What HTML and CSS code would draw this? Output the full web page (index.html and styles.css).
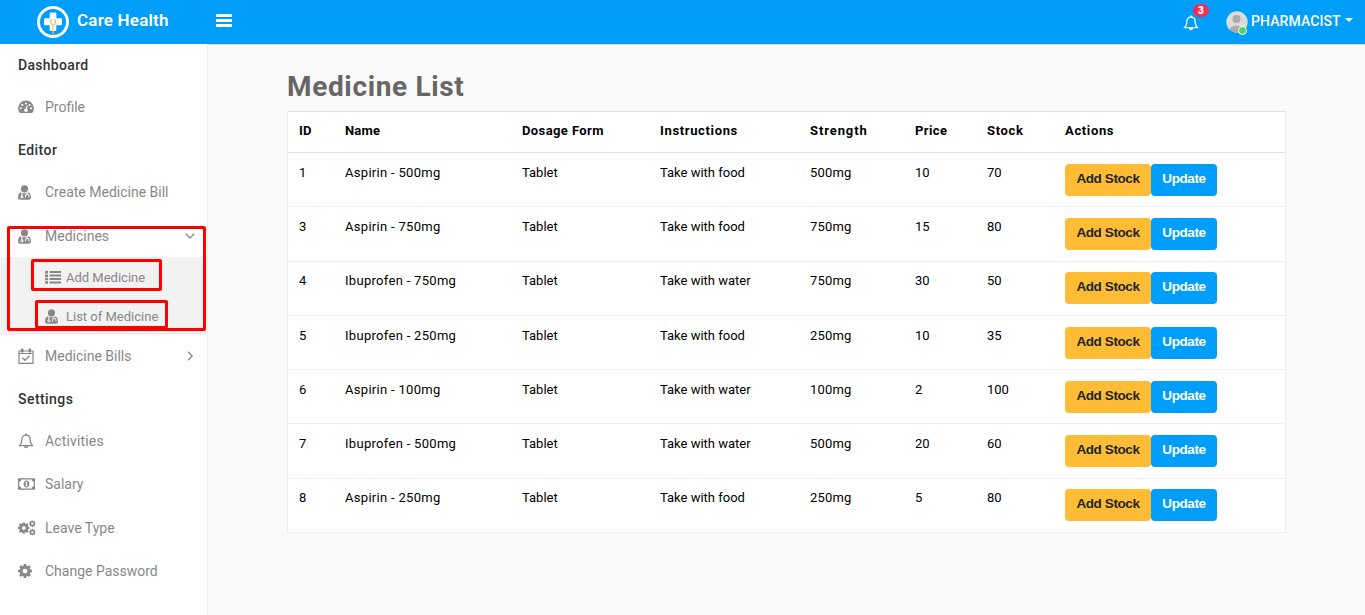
FILE: index.html
```html
<!DOCTYPE html>
<html lang="en">
<head>
<meta charset="utf-8">
<title>Care Health</title>
<link rel="stylesheet" href="styles.css">
</head>
<body>
<svg width="0" height="0" class="defs">
  <symbol id="cog" viewBox="128 128 1536 1536"><path d="M1152 896q0-106-75-181t-181-75-181 75-75 181 75 181 181 75 181-75 75-181zm512-109v222q0 12-8 23t-20 13l-185 28q-19 54-39 91 35 50 107 138 10 12 10 25t-9 23q-27 37-99 108t-94 71q-12 0-26-9l-138-108q-44 23-91 38-16 136-29 186-7 28-36 28h-222q-14 0-24.5-8.5t-11.5-21.5l-28-184q-49-16-90-37l-141 107q-10 9-25 9-14 0-25-11-126-114-165-168-7-10-7-23 0-12 8-23 15-21 51-66.5t54-70.5q-27-50-41-99l-183-27q-13-2-21-12.5t-8-23.5v-222q0-12 8-23t19-13l186-28q14-46 39-92-40-57-107-138-10-12-10-24 0-10 9-23 26-36 98.5-107.5t94.5-71.5q13 0 26 10l138 107q44-23 91-38 16-136 29-186 7-28 36-28h222q14 0 24.5 8.5t11.5 21.5l28 184q49 16 90 37l142-107q9-9 24-9 13 0 25 10 129 119 165 170 7 8 7 22 0 12-8 23-15 21-51 66.5t-54 70.5q26 50 41 98l183 28q13 2 21 12.5t8 23.5z"/></symbol>
  <symbol id="doctor" viewBox="0 0 13 15"><circle cx="6.5" cy="3.8" r="3.6"/><path fill-rule="evenodd" d="M3.2 7.2C1 7.6 0 9.500 0 12.200 0 13.900.9 14.700 2.500 14.700h8c1.600 0 2.500-.8 2.500-2.500 0-2.700-1-4.600-3.200-5L9.500 9c1.500.2 2 1 2 2.200v1.300h-1V11.200c0-.8-.4-1.200-1.200-1.200S8 10.400 8 11.200v1.300H7V11c0-1 .6-1.800 1.600-2V7.700c-1.300.8-2.900.8-4.200 0v2.700c.8.300 1.100.8 1.100 1.400a1.500 1.500 0 0 1-3 0c0-.6.300-1.100.9-1.400zM4 11.200a.6.6 0 1 0 0 1.200.6.6 0 0 0 0-1.200z"/></symbol>
  <symbol id="bell" viewBox="0 0 16 16"><path d="M1.300 12.700C3.400 10.900 3.900 9 3.900 6.500c0-2.500 1.500-4.300 4.100-4.300s4.100 1.800 4.100 4.300c0 2.500.5 4.400 2.600 6.200z" fill="none" stroke="currentColor" stroke-width="1.300" stroke-linejoin="round"/><path d="M7.200.500h1.600v1.700H7.200zM5.900 13.200h4.200a2.100 2.100 0 0 1-4.200 0z"/></symbol>
</svg>
<header class="topbar">
  <div class="brand">
    <svg class="logo" viewBox="0 0 32 32"><circle cx="16" cy="16" r="14.500" fill="none" stroke="#fff" stroke-width="3"/><path d="M13.700 6.500h4.600a1 1 0 0 1 1 1v4.800H24a1 1 0 0 1 1 1v4.900a1 1 0 0 1-1 1h-4.700V24a1 1 0 0 1-1 1h-4.600a1 1 0 0 1-1-1v-4.800H8a1 1 0 0 1-1-1v-4.900a1 1 0 0 1 1-1h4.700V7.500a1 1 0 0 1 1-1z" fill="#fff"/><path d="M14.500 12.800c-1.700 2.400-1.300 5 1.500 6.200 2.800-1.200 3.200-3.800 1.500-6.200M16 19v9.500" fill="none" stroke="#f5bd52" stroke-width="1.200"/></svg>
    <span class="brand-name">Care Health</span>
  </div>
  <svg class="bars" viewBox="0 0 16 13"><path d="M0 0h16v3H0zM0 5h16v3H0zM0 10h16v3H0z"/></svg>
  <div class="alerts"><svg class="alert-bell"><use href="#bell"/></svg><span class="badge">3</span></div>
  <div class="avatar"><svg viewBox="0 0 22 22"><clipPath id="round"><circle cx="11" cy="11" r="10.700"/></clipPath><g clip-path="url(#round)"><path fill="#dcdcdc" d="M0 0h22v22H0z"/><circle cx="10.500" cy="8" r="4" fill="#aaa"/><ellipse cx="10.500" cy="20" rx="7" ry="5.500" fill="#aaa"/></g></svg><i class="online"></i></div>
  <span class="user">PHARMACIST</span><i class="caret"></i>
</header>
<div class="shell">
  <nav class="side">
    <div class="head">Dashboard</div>
    <a class="item"><svg class="ic" viewBox="0 0 17 16"><path fill-rule="evenodd" d="M8.500 1.200a8.300 8.300 0 0 0-7 12.700c.2.300.4.400.8.400h12.400c.4 0 .6-.1.800-.4a8.300 8.300 0 0 0-7-12.700zM3 8.300a1.100 1.100 0 1 0 0 2.200 1.100 1.100 0 0 0 0-2.200zM4.600 4.700a1.100 1.100 0 1 0 0 2.200 1.100 1.100 0 0 0 0-2.200zM8.500 3.200a1.100 1.100 0 1 0 0 2.200 1.100 1.100 0 0 0 0-2.200zM12.300 4.700a1.100 1.100 0 1 0 0 2.200 1.100 1.100 0 0 0 0-2.200zM13.900 8.300a1.100 1.100 0 1 0 0 2.200 1.100 1.100 0 0 0 0-2.200zM9.300 6.200l-1 3.500a1.800 1.800 0 1 0 1.200.3l.9-3.500z"/></svg>Profile</a>
    <div class="head short">Editor</div>
    <a class="item"><svg class="ic doc"><use href="#doctor"/></svg>Create Medicine Bill</a>
    <a class="item open"><svg class="ic doc"><use href="#doctor"/></svg>Medicines<svg class="chev" viewBox="0 0 10 10"><path d="M.8 2.800L5 7l4.200-4.200"/></svg></a>
    <div class="sub">
      <a class="item"><svg class="ic" viewBox="0 0 16 14"><path d="M0 1h3v2.500H0zM4.500 1H16v2H4.500zM0 4.400h3v2.500H0zM4.500 4.600H16v2H4.500zM0 7.800h3v2.500H0zM4.500 8.100H16v2H4.500zM0 11.200h3v2.500H0zM4.500 11.600H16v2H4.500z"/></svg>Add Medicine</a>
      <a class="item last"><svg class="ic doc"><use href="#doctor"/></svg>List of Medicine</a>
    </div>
    <a class="item"><svg class="ic" viewBox="0 0 16 16"><path d="M1 3h14v12.300H1zM1 5.500h14" fill="none" stroke="currentColor" stroke-width="1.200"/><path d="M3 .5h2.500v4H3zM10.500.500H13v4h-2.500z"/><path d="M4.500 9.700l2.500 2.500 4.500-4.500" fill="none" stroke="currentColor" stroke-width="1.400"/></svg>Medicine Bills<svg class="chev" viewBox="0 0 10 10"><path d="M3 .8L7.200 5 3 9.200"/></svg></a>
    <div class="head short">Settings</div>
    <a class="item wide"><svg class="ic"><use href="#bell"/></svg>Activities</a>
    <a class="item"><svg class="ic money" viewBox="0 0 18 12"><path fill-rule="evenodd" d="M0 0h18v12H0zM3.500 1.300A2.300 2.300 0 0 1 1.300 3.500v5a2.300 2.300 0 0 1 2.200 2.200h11a2.300 2.300 0 0 1 2.200-2.200v-5a2.300 2.300 0 0 1-2.200-2.200z"/><path fill-rule="evenodd" d="M9 2.200c-2 0-3 1.600-3 3.800s1 3.800 3 3.800 3-1.600 3-3.800-1-3.800-3-3.800zM8.600 3.500h1v4.100h.8v.8H7.700v-.8h.8V5l-.7.300v-1z"/></svg>Salary</a>
    <a class="item leave"><svg class="ic gears" viewBox="0 0 18 16"><use href="#cog" x="0" y="2.200" width="11.600" height="11.600"/><use href="#cog" x="11" y=".3" width="6.600" height="6.600"/><use href="#cog" x="11" y="9" width="6.600" height="6.600"/></svg>Leave Type</a>
    <a class="item"><svg class="ic gear"><use href="#cog"/></svg>Change Password</a>
    <i class="mark m1"></i><i class="mark m2"></i><i class="mark m3"></i>
  </nav>
  <main class="main">
    <h1>Medicine List</h1>
    <table>
      <colgroup><col class="c1"><col class="c2"><col class="c3"><col class="c4"><col class="c5"><col class="c6"><col class="c7"><col></colgroup>
      <thead><tr><th>ID</th><th>Name</th><th class="mid">Dosage Form</th><th class="loose">Instructions</th><th class="looser">Strength</th><th class="mid">Price</th><th class="loose">Stock</th><th class="loose">Actions</th></tr></thead>
      <tbody>
      <tr><td>1</td><td>Aspirin - 500mg</td><td>Tablet</td><td>Take with food</td><td>500mg</td><td>10</td><td>70</td><td><div class="acts"><button class="add">Add Stock</button><button class="upd">Update</button></div></td></tr>
      <tr class="tall"><td>3</td><td>Aspirin - 750mg</td><td>Tablet</td><td>Take with food</td><td>750mg</td><td>15</td><td>80</td><td><div class="acts"><button class="add">Add Stock</button><button class="upd">Update</button></div></td></tr>
      <tr><td>4</td><td>Ibuprofen - 750mg</td><td>Tablet</td><td>Take with water</td><td>750mg</td><td>30</td><td>50</td><td><div class="acts"><button class="add">Add Stock</button><button class="upd">Update</button></div></td></tr>
      <tr><td>5</td><td>Ibuprofen - 250mg</td><td>Tablet</td><td>Take with food</td><td>250mg</td><td>10</td><td>35</td><td><div class="acts"><button class="add">Add Stock</button><button class="upd">Update</button></div></td></tr>
      <tr><td>6</td><td>Aspirin - 100mg</td><td>Tablet</td><td>Take with water</td><td>100mg</td><td>2</td><td>100</td><td><div class="acts"><button class="add">Add Stock</button><button class="upd">Update</button></div></td></tr>
      <tr class="tall"><td>7</td><td>Ibuprofen - 500mg</td><td>Tablet</td><td>Take with water</td><td>500mg</td><td>20</td><td>60</td><td><div class="acts"><button class="add">Add Stock</button><button class="upd">Update</button></div></td></tr>
      <tr><td>8</td><td>Aspirin - 250mg</td><td>Tablet</td><td>Take with food</td><td>250mg</td><td>5</td><td>80</td><td><div class="acts"><button class="add">Add Stock</button><button class="upd">Update</button></div></td></tr>
      </tbody>
    </table>
  </main>
</div>
</body>
</html>
```
FILE: styles.css
```css
* { box-sizing: border-box; }
html, body { height: 100%; }
body { margin: 0; background: #fafafa; font-family: Roboto, "Liberation Sans", sans-serif; overflow: hidden; }
svg { fill: currentColor; flex: none; }
.defs { position: absolute; }
.topbar { height: 44px; background: #009efb; color: #fff; display: flex; align-items: center; box-shadow: 0 1px 1px rgba(0,0,0,.12); position: relative; }
.brand { width: 216px; padding-left: 37px; display: flex; align-items: center; gap: 8px; }
.logo { width: 32px; height: 32px; margin-top: -1px; }
.brand-name { font-size: 17px; font-weight: 600; line-height: 20px; margin-top: -4px; letter-spacing: .2px; white-space: nowrap; }
.bars { width: 16px; height: 13px; margin-top: -3px; }
.alerts { margin-left: auto; position: relative; width: 16px; height: 44px; padding-top: 15px; }
.alert-bell { width: 16px; height: 16px; display: block; }
.badge { position: absolute; left: 10px; top: 4px; width: 16px; height: 13px; border-radius: 7px; background: #f62d51; font-size: 10px; line-height: 13px; font-weight: 900; text-align: center; }
.avatar { position: relative; width: 22px; height: 22px; margin-left: 27px; }
.avatar svg { width: 22px; height: 22px; display: block; }
.online { position: absolute; left: 12px; top: 15px; width: 9px; height: 9px; border-radius: 50%; background: #55ce63; border: 1px solid #fff; }
.user { width: 90px; margin-left: 3px; font-size: 14px; line-height: 20px; letter-spacing: .1px; font-weight: 500; margin-top: -2px; white-space: nowrap; }
.caret { border: 4px solid transparent; border-top-color: #fff; border-bottom: 0; margin: -4px 12px 0 4px; }
.shell { display: flex; height: 571px; }
.side { width: 208px; border-right: 1px solid #efefef; background: #fff; position: relative; color: #888; }
.head { height: 42px; line-height: 42px; padding-left: 18px; font-size: 14px; font-weight: 500; color: #333; letter-spacing: .3px; }
.head.short { letter-spacing: .45px; }
.item { height: 43px; display: flex; align-items: center; padding: 0 0 1px 18px; font-size: 14px; white-space: nowrap; }
.item.wide { letter-spacing: .15px; }
.ic { width: 16px; height: 16px; margin-right: 11px; }
.ic.doc { width: 13px; height: 15px; margin-right: 14px; }
.ic.money { width: 17px; height: 12px; margin-right: 10px; }
.ic.gears { width: 18px; margin-right: 9px; }
.ic.gear { width: 14px; height: 14px; margin-right: 13px; }
.item.leave { height: 44px; padding-bottom: 0; }
.item.open { height: 41px; margin-top: 2px; }
.chev { width: 10px; height: 10px; margin-left: auto; margin-right: 12px; }
.chev path { fill: none; stroke: currentColor; stroke-width: 1.300; }
.sub { background: #f2f2f2; height: 78px; }
.sub .item { height: 41px; padding-left: 45px; font-size: 13px; }
.sub .item.last { height: 37px; }
.sub .ic { margin-right: 5px; }
.sub .ic.doc { margin-right: 8px; }
.mark { position: absolute; border: 3px solid #f00; border-radius: 2px; }
.m1 { left: 7px; top: 182px; width: 199px; height: 105px; }
.m2 { left: 31px; top: 215px; width: 131px; height: 32px; }
.m3 { left: 35px; top: 256px; width: 133px; height: 29px; }
.main { padding: 26px 0 0 79px; }
h1 { margin: 0; height: 41px; line-height: 34px; font-size: 28px; font-weight: 700; color: #666; letter-spacing: .65px; }
table { width: 999px; table-layout: fixed; border-collapse: separate; border-spacing: 0; background: #fff; border: 1px solid #ececec; border-top-color: #dee2e6; border-bottom: 0; font-size: 13px; color: #000; }
.c1 { width: 46px; } .c2 { width: 177px; } .c3 { width: 138px; } .c4 { width: 150px; } .c5 { width: 105px; } .c6 { width: 72px; } .c7 { width: 78px; }
th { height: 41px; padding: 0 0 3px 11px; text-align: left; font-weight: 700; border-bottom: 1px solid #dee2e6; letter-spacing: .2px; }
th.mid { letter-spacing: .4px; }
th.loose { letter-spacing: .65px; }
th.looser { letter-spacing: .9px; }
td { height: 54px; padding: 11px 0 0 11px; line-height: 17px; vertical-align: top; border-bottom: 1px solid #efefef; letter-spacing: .2px; white-space: nowrap; }
td:nth-child(2) { letter-spacing: .3px; }
td:nth-child(3), td:nth-child(4) { letter-spacing: 0; }
td:nth-child(6), td:nth-child(7) { letter-spacing: -.1px; }
.tall td { height: 55px; }
.tall + tr td { padding-top: 10px; }
.acts { display: flex; }
button { height: 32px; border: 0; border-radius: 4px; padding: 0 0 3px; font: bold 13.5px "Liberation Sans", Arial, sans-serif; letter-spacing: -.4px; }
.add { width: 86px; background: #ffbc34; color: #212529; }
.upd { width: 66px; background: #009efb; color: #fff; }
```
